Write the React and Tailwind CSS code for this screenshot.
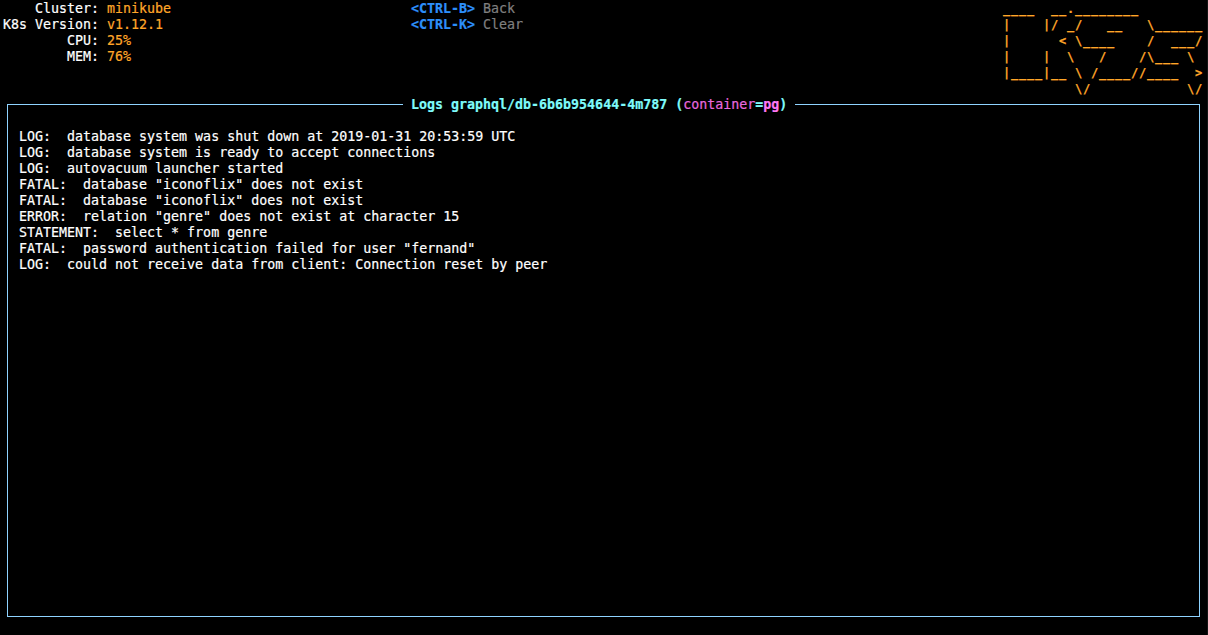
import React from 'react';

const clusterInfo = [
  { label: '    Cluster:', value: 'minikube' },
  { label: 'K8s Version:', value: 'v1.12.1' },
  { label: '        CPU:', value: '25%' },
  { label: '        MEM:', value: '76%' },
];

const shortcuts = [
  { keys: '<CTRL-B>', action: 'Back' },
  { keys: '<CTRL-K>', action: 'Clear' },
];

const logo = [
  '____  __.________',
  '|    |/ _/   __   \\______',
  '|      < \\____    /  ___/',
  '|    |  \\   /    /\\___ \\',
  '|____|__ \\ /____//____  >',
  '         \\/            \\/',
];

const logLines = [
  'LOG:  database system was shut down at 2019-01-31 20:53:59 UTC',
  'LOG:  database system is ready to accept connections',
  'LOG:  autovacuum launcher started',
  'FATAL:  database "iconoflix" does not exist',
  'FATAL:  database "iconoflix" does not exist',
  'ERROR:  relation "genre" does not exist at character 15',
  'STATEMENT:  select * from genre',
  'FATAL:  password authentication failed for user "fernand"',
  'LOG:  could not receive data from client: Connection reset by peer',
];

export default function App() {
  return (
    <div className="h-[635px] w-[1208px] overflow-hidden border-r border-[#141414] bg-black font-['DejaVu_Sans_Mono',monospace] text-[13.3px] leading-4 text-white whitespace-pre [-webkit-text-stroke:0.2px]">
      {/* Header */}
      <div className="flex h-[104px] pl-[3px]">
        <div className="w-[408px] pt-px">
          {clusterInfo.map((row) => (
            <div key={row.label} className="flex gap-2">
              <span>{row.label}</span>
              <span className="text-[#ffa629]">{row.value}</span>
            </div>
          ))}
        </div>
        <div className="w-[592px] pt-px">
          {shortcuts.map((s) => (
            <div key={s.keys} className="flex gap-2">
              <span className="font-bold text-[#2d8ffa]">{s.keys}</span>
              <span className="text-[#7f7f7f]">{s.action}</span>
            </div>
          ))}
        </div>
        {/* smaller glyphs on the same 8px cell so the underscores read as dashes */}
        <div className="pt-px text-[12px] font-bold tracking-[0.78px] text-[#ffa629]">
          {logo.map((line, i) => (
            <div key={i}>{line}</div>
          ))}
        </div>
      </div>

      {/* Logs panel */}
      <div className="relative ml-[7px] h-[513px] w-[1193px] border border-[#8fd3ff] px-[11px] pt-[24px]">
        <div className="absolute -top-2 left-[395px] bg-black px-2 font-bold text-[#7ffbfb]">
          Logs graphql/db-6b6b954644-4m787 (
          <span className="font-normal text-[#e868df]">container</span>=
          <span className="text-[#ff78f4]">pg</span>)
        </div>
        {logLines.map((line, i) => (
          <div key={i}>{line}</div>
        ))}
      </div>
    </div>
  );
}
